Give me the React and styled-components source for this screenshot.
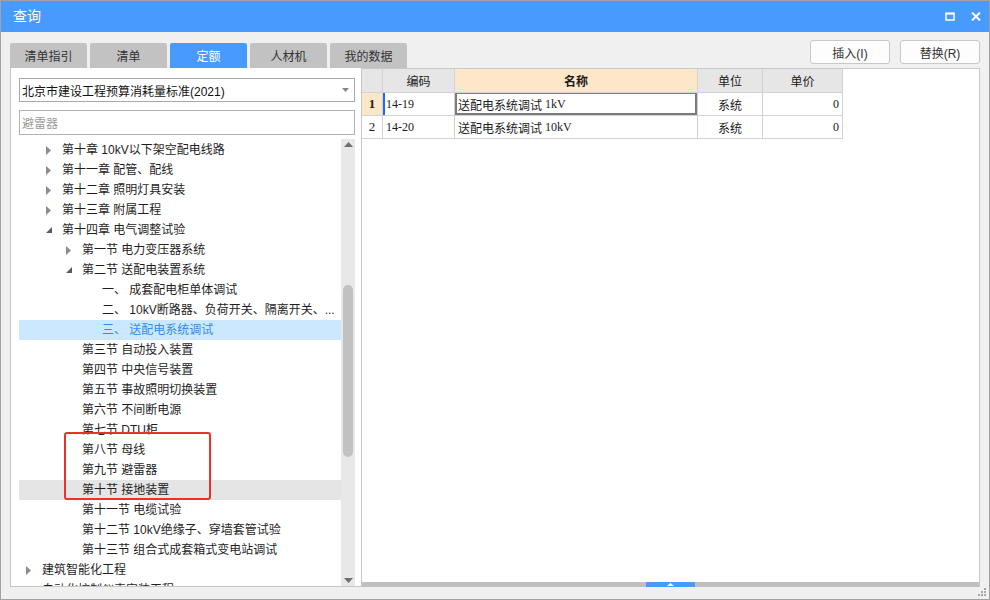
import React from "react";
import styled, { createGlobalStyle } from "styled-components";

const GlobalStyle = createGlobalStyle`
  html, body {
    margin: 0;
    padding: 0;
    background: #ffffff;
  }
  body {
    font-family: "Liberation Sans", "Noto Sans CJK SC", sans-serif;
    color: #222;
  }
`;

const BLUE = "#479bff";

const Window = styled.div`
  position: relative;
  width: 990px;
  height: 600px;
  box-sizing: border-box;
  border: 1px solid #a2a2a2;
  background: #f0f0f0;
  display: flex;
  flex-direction: column;
  overflow: hidden;
`;

const TitleBar = styled.div`
  height: 31px;
  flex: none;
  background: ${BLUE};
  display: flex;
  align-items: center;
  padding: 0 8px 0 12px;
  color: #ffffff;
  font-size: 14px;
  line-height: 31px;
`;

const TitleButtons = styled.div`
  margin-left: auto;
  display: flex;
  align-items: center;
  gap: 16px;
`;

const Body = styled.div`
  flex: 1;
  display: flex;
  flex-direction: column;
  padding: 8px 9px 12px 9px;
  min-height: 0;
`;

const TopRow = styled.div`
  height: 28px;
  display: flex;
  justify-content: space-between;
  flex: none;
`;

const Tabs = styled.div`
  display: flex;
  align-items: flex-end;
  gap: 3px;
`;

const Tab = styled.div`
  width: 77px;
  height: 25px;
  border-radius: 2px 2px 0 0;
  background: ${(p) => (p.$active ? BLUE : "#c2c2c2")};
  color: ${(p) => (p.$active ? "#ffffff" : "#333333")};
  font-size: 12px;
  display: flex;
  align-items: center;
  justify-content: center;
`;

const Actions = styled.div`
  display: flex;
  align-items: flex-start;
  gap: 10px;
`;

const ActionButton = styled.div`
  width: 80px;
  height: 24px;
  box-sizing: border-box;
  border: 1px solid #c9c9c9;
  border-radius: 3px;
  background: #fdfdfd;
  font-size: 12px;
  color: #333;
  display: flex;
  align-items: center;
  justify-content: center;
`;

const Main = styled.div`
  height: 519px;
  display: flex;
  flex: none;
`;

const LeftPanel = styled.div`
  width: 351px;
  box-sizing: border-box;
  border-left: 1px solid #c6c6c6;
  border-bottom: 1px solid #c6c6c6;
  background: #ffffff;
  padding: 10px 6px 0 8px;
  display: flex;
  flex-direction: column;
`;

const Select = styled.div`
  height: 24px;
  box-sizing: border-box;
  border: 1px solid #a9a9a9;
  display: flex;
  align-items: center;
  padding: 0 5px 0 2px;
  font-size: 12px;
  color: #111;
`;

const SelectText = styled.span`
  flex: 1;
`;

const SearchBox = styled.div`
  margin-top: 8px;
  height: 25px;
  box-sizing: border-box;
  border: 1px solid #b2b2b2;
  display: flex;
  align-items: center;
  padding: 0 2px;
  font-size: 12px;
  color: #9a9a9a;
`;

const TreeArea = styled.div`
  margin-top: 4px;
  flex: 1;
  min-height: 0;
  display: flex;
`;

const TreeList = styled.div`
  position: relative;
  flex: 1;
  overflow: hidden;
  padding-top: 1px;
`;

const Row = styled.div`
  height: 20px;
  display: flex;
  align-items: center;
  padding-left: ${(p) => 3 + p.$level * 20}px;
  background: ${(p) =>
    p.$selected ? "#cce8ff" : p.$hover ? "#e5e5e5" : "transparent"};
  color: ${(p) => (p.$selected ? "#2f8cf0" : "#1e1e1e")};
  font-size: 12px;
  line-height: 20px;
  white-space: nowrap;
`;

const Toggle = styled.span`
  width: 20px;
  flex: none;
  display: flex;
  align-items: center;
  padding-left: 4px;
  box-sizing: border-box;
`;

const Annotation = styled.div`
  position: absolute;
  left: 45px;
  top: 293px;
  width: 147px;
  height: 68px;
  box-sizing: border-box;
  border: 2px solid #e8322a;
  border-radius: 3px;
  pointer-events: none;
`;

const ScrollBar = styled.div`
  width: 14px;
  flex: none;
  background: #e8e8e8;
  display: flex;
  flex-direction: column;
  align-items: center;
`;

const ScrollArrow = styled.div`
  height: 14px;
  display: flex;
  align-items: ${(p) => (p.$down ? "flex-end" : "flex-start")};
  padding: ${(p) => (p.$down ? "0 0 3px" : "3px 0 0")};
  box-sizing: border-box;
  flex: none;
`;

const ScrollTrack = styled.div`
  flex: 1;
  width: 100%;
  display: flex;
  justify-content: center;
`;

const Thumb = styled.div`
  margin-top: 132px;
  width: 10px;
  height: 172px;
  border-radius: 5px;
  background: #c1c1c1;
`;

const RightPanel = styled.div`
  flex: 1;
  box-sizing: border-box;
  border: 1px solid #c8c8c8;
  border-bottom: none;
  background: #ffffff;
  display: flex;
  flex-direction: column;
`;

const Grid = styled.div`
  display: grid;
  grid-template-columns: 21px 72px 243px 65px 80px;
  width: 481px;
`;

const Cell = styled.div`
  box-sizing: border-box;
  height: ${(p) => (p.$head ? 24 : 23)}px;
  border-right: 1px solid #d2d2d2;
  border-bottom: 1px solid #d2d2d2;
  display: flex;
  align-items: center;
  justify-content: ${(p) => p.$align || "flex-start"};
  padding: 0 3px;
  font-size: 12px;
  white-space: nowrap;
  background: ${(p) => p.$bg || "#ffffff"};
  font-weight: ${(p) => (p.$bold ? "bold" : "normal")};
  color: #1a1a1a;
  box-shadow: ${(p) => p.$shadow || "none"};
`;

const Code = styled.span`
  font-family: "Liberation Serif", "Noto Sans CJK SC", serif;
  font-size: 12px;
`;

const RowNum = styled.span`
  font-family: "Liberation Serif", serif;
  font-size: 13px;
  font-weight: ${(p) => (p.$bold ? "bold" : "normal")};
`;

const Spacer = styled.div`
  flex: 1;
`;

const SplitBar = styled.div`
  height: 5px;
  flex: none;
  background: #c0c0c0;
  display: flex;
  justify-content: center;
`;

const SplitHandle = styled.div`
  width: 49px;
  height: 5px;
  background: ${BLUE};
  display: flex;
  align-items: center;
  justify-content: center;
`;

const Grip = styled.svg`
  position: absolute;
  right: 2px;
  bottom: 2px;
`;

const tree = [
  { l: 1, t: "c", s: "第十章 10kV以下架空配电线路" },
  { l: 1, t: "c", s: "第十一章 配管、配线" },
  { l: 1, t: "c", s: "第十二章 照明灯具安装" },
  { l: 1, t: "c", s: "第十三章 附属工程" },
  { l: 1, t: "e", s: "第十四章 电气调整试验" },
  { l: 2, t: "c", s: "第一节 电力变压器系统" },
  { l: 2, t: "e", s: "第二节 送配电装置系统" },
  { l: 3, s: "一、 成套配电柜单体调试" },
  { l: 3, s: "二、 10kV断路器、负荷开关、隔离开关、..." },
  { l: 3, s: "三、 送配电系统调试", sel: true },
  { l: 2, s: "第三节 自动投入装置" },
  { l: 2, s: "第四节 中央信号装置" },
  { l: 2, s: "第五节 事故照明切换装置" },
  { l: 2, s: "第六节 不间断电源" },
  { l: 2, s: "第七节 DTU柜" },
  { l: 2, s: "第八节 母线" },
  { l: 2, s: "第九节 避雷器" },
  { l: 2, s: "第十节 接地装置", hov: true },
  { l: 2, s: "第十一节 电缆试验" },
  { l: 2, s: "第十二节 10kV绝缘子、穿墙套管试验" },
  { l: 2, s: "第十三节 组合式成套箱式变电站调试" },
  { l: 0, t: "c", s: "建筑智能化工程" },
  { l: 0, t: "c", s: "自动化控制仪表安装工程" },
];

function Arrow({ type }) {
  if (type === "c") {
    return (
      <svg width="5" height="9" viewBox="0 0 5 9">
        <polygon points="0,0 5,4.5 0,9" fill="#8c8c8c" />
      </svg>
    );
  }
  if (type === "e") {
    return (
      <svg width="6" height="6" viewBox="0 0 6 6">
        <polygon points="6,0 6,6 0,6" fill="#5a5a5a" />
      </svg>
    );
  }
  return null;
}

function App() {
  return (
    <>
      <GlobalStyle />
      <Window>
        <TitleBar>
          查询
          <TitleButtons>
            <svg width="10" height="9" viewBox="0 0 10 9">
              <rect x="1" y="1.5" width="8" height="6.5" fill="none" stroke="#fff" strokeWidth="1.5" />
              <rect x="0.5" y="0.5" width="9" height="2" fill="#fff" />
            </svg>
            <svg width="10" height="9" viewBox="0 0 10 9">
              <path d="M1 0.5 L9 8.5 M9 0.5 L1 8.5" stroke="#fff" strokeWidth="2" />
            </svg>
          </TitleButtons>
        </TitleBar>
        <Body>
          <TopRow>
            <Tabs>
              <Tab>清单指引</Tab>
              <Tab>清单</Tab>
              <Tab $active>定额</Tab>
              <Tab>人材机</Tab>
              <Tab>我的数据</Tab>
            </Tabs>
            <Actions>
              <ActionButton>插入(I)</ActionButton>
              <ActionButton>替换(R)</ActionButton>
            </Actions>
          </TopRow>
          <Main>
            <LeftPanel>
              <Select>
                <SelectText>北京市建设工程预算消耗量标准(2021)</SelectText>
                <svg width="7" height="4" viewBox="0 0 7 4">
                  <polygon points="0,0 7,0 3.5,4" fill="#888" />
                </svg>
              </Select>
              <SearchBox>避雷器</SearchBox>
              <TreeArea>
                <TreeList>
                  {tree.map((r, i) => (
                    <Row key={i} $level={r.l} $selected={r.sel} $hover={r.hov}>
                      <Toggle>
                        <Arrow type={r.t} />
                      </Toggle>
                      {r.s}
                    </Row>
                  ))}
                  <Annotation />
                </TreeList>
                <ScrollBar>
                  <ScrollArrow>
                    <svg width="9" height="5" viewBox="0 0 9 5">
                      <polygon points="0,5 4.5,0 9,5" fill="#6e6e6e" />
                    </svg>
                  </ScrollArrow>
                  <ScrollTrack>
                    <Thumb />
                  </ScrollTrack>
                  <ScrollArrow $down>
                    <svg width="9" height="5" viewBox="0 0 9 5">
                      <polygon points="0,0 9,0 4.5,5" fill="#6e6e6e" />
                    </svg>
                  </ScrollArrow>
                </ScrollBar>
              </TreeArea>
            </LeftPanel>
            <RightPanel>
              <Grid>
                <Cell $head $bg="#e6e6e6" />
                <Cell $head $bg="#e6e6e6" $align="center">编码</Cell>
                <Cell $head $bg="#fde7c9" $align="center" $bold>名称</Cell>
                <Cell $head $bg="#e6e6e6" $align="center">单位</Cell>
                <Cell $head $bg="#e6e6e6" $align="center">单价</Cell>

                <Cell $bg="#fde7c9" $align="center">
                  <RowNum $bold>1</RowNum>
                </Cell>
                <Cell $shadow="inset 2px 0 #1769ff">
                  <Code>14-19</Code>
                </Cell>
                <Cell $shadow="inset 2px 0 #7b7b7b, inset -2px 0 #7b7b7b, inset 0 -2px #7b7b7b, inset 0 1px #3d8ef0">
                  送配电系统调试 <Code>&nbsp;1kV</Code>
                </Cell>
                <Cell $align="center">系统</Cell>
                <Cell $align="flex-end">
                  <Code>0</Code>
                </Cell>

                <Cell $align="center">
                  <RowNum>2</RowNum>
                </Cell>
                <Cell>
                  <Code>14-20</Code>
                </Cell>
                <Cell>
                  送配电系统调试 <Code>&nbsp;10kV</Code>
                </Cell>
                <Cell $align="center">系统</Cell>
                <Cell $align="flex-end">
                  <Code>0</Code>
                </Cell>
              </Grid>
              <Spacer />
              <SplitBar>
                <SplitHandle>
                  <svg width="7" height="3" viewBox="0 0 7 3">
                    <polygon points="0,3 3.5,0 7,3" fill="#fff" />
                  </svg>
                </SplitHandle>
              </SplitBar>
            </RightPanel>
          </Main>
        </Body>
        <Grip width="9" height="9" viewBox="0 0 9 9">
          <rect x="6" y="0" width="2" height="2" fill="#a8a8a8" />
          <rect x="3" y="3" width="2" height="2" fill="#a8a8a8" />
          <rect x="6" y="3" width="2" height="2" fill="#a8a8a8" />
          <rect x="0" y="6" width="2" height="2" fill="#a8a8a8" />
          <rect x="3" y="6" width="2" height="2" fill="#a8a8a8" />
          <rect x="6" y="6" width="2" height="2" fill="#a8a8a8" />
        </Grip>
      </Window>
    </>
  );
}

export default App;
